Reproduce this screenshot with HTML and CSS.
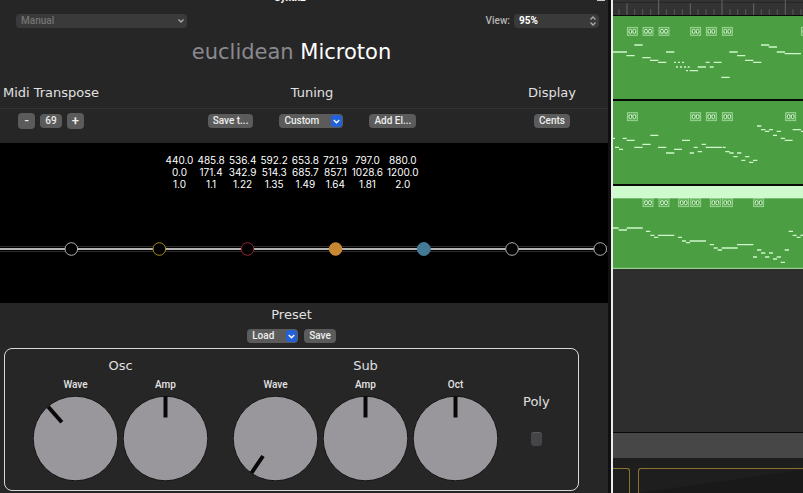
FILE: index.html
```
<!DOCTYPE html>
<html lang="en">
<head>
<meta charset="utf-8">
<title>Synth2</title>
<link rel="stylesheet" href="styles.css">
</head>
<body>
<main class="screen">
  <section class="plugin">
    <header class="titlebar"><span>Synth2</span><i class="link-icon"></i></header>
    <div class="toolbar">
      <span class="picker preset"><select aria-label="Preset mode" disabled><option>Manual</option></select>
        <svg class="chev" viewBox="0 0 8 6"><path d="M1.5 1.5 4 4 6.5 1.5"/></svg></span>
      <div class="view">
        <label for="zoom">View:</label>
        <span class="picker zoom"><select id="zoom"><option>95%</option></select>
          <svg class="updown" viewBox="0 0 8 10"><path d="M1.5 3.5 4 1 6.5 3.5M1.5 6.5 4 9 6.5 6.5"/></svg></span>
      </div>
    </div>
    <h1><span>euclidean</span> Microton</h1>
    <div class="heads"><h2>Midi Transpose</h2><h2>Tuning</h2><h2>Display</h2></div>
    <div class="controls">
      <div class="group steps"><button class="square">-</button><button>69</button><button class="square">+</button></div>
      <div class="group tuning">
        <button>Save t...</button>
        <span class="pop custom"><select aria-label="Tuning"><option>Custom</option></select><svg viewBox="0 0 10 11"><rect width="10" height="11" rx="2.5"/><path d="M2.5 4.5 5 7 7.5 4.5"/></svg></span>
        <button>Add El...</button>
      </div>
      <div class="group"><button>Cents</button></div>
    </div>
    <div class="scale">
      <table>
        <tr><td>440.0</td><td>485.8</td><td>536.4</td><td>592.2</td><td>653.8</td><td>721.9</td><td>797.0</td><td>880.0</td></tr>
        <tr><td>0.0</td><td>171.4</td><td>342.9</td><td>514.3</td><td>685.7</td><td>857.1</td><td>1028.6</td><td>1200.0</td></tr>
        <tr><td>1.0</td><td>1.1</td><td>1.22</td><td>1.35</td><td>1.49</td><td>1.64</td><td>1.81</td><td>2.0</td></tr>
      </table>
      <svg class="line" viewBox="0 0 608 16">
        <path d="M0 5.5H608M0 10.5H608" stroke="#2c2c2c"/>
        <path d="M0 8H600" stroke="#b4b4b4" stroke-width="2"/>
        <g fill="#000" stroke-width="1">
          <circle cx="71.3" cy="8" r="6.3" stroke="#b0b0b0"/>
          <circle cx="159.3" cy="8" r="6.3" stroke="#a58a1c"/>
          <circle cx="247.5" cy="8" r="6.3" stroke="#8e2430"/>
          <circle cx="335.6" cy="8" r="6.3" fill="#ca8732" stroke="#ca8732"/>
          <circle cx="423.8" cy="8" r="6.5" fill="#457a96" stroke="#457a96"/>
          <circle cx="512" cy="8" r="6.3" stroke="#b0b0b0"/>
          <circle cx="600.2" cy="8" r="6.3" stroke="#b0b0b0"/>
        </g>
      </svg>
    </div>
    <div class="presets">
      <h2>Preset</h2>
      <div class="group">
        <span class="pop load"><select aria-label="Preset"><option>Load</option></select><svg viewBox="0 0 10 11"><rect width="10" height="11" rx="2.5"/><path d="M2.5 4.5 5 7 7.5 4.5"/></svg></span>
        <button>Save</button>
      </div>
    </div>
    <div class="synth">
      <section class="bank"><h2>Osc</h2>
        <div class="knobs">
          <figure><figcaption>Wave</figcaption><svg viewBox="0 0 85 85"><circle cx="42.5" cy="42.5" r="42.3"/><path d="M15.2 10.8 28.8 26.2"/></svg></figure>
          <figure><figcaption>Amp</figcaption><svg viewBox="0 0 85 85"><circle cx="42.5" cy="42.5" r="42.3"/><path d="M42.5 0V21.5"/></svg></figure>
        </div>
      </section>
      <section class="bank"><h2>Sub</h2>
        <div class="knobs">
          <figure><figcaption>Wave</figcaption><svg viewBox="0 0 85 85"><circle cx="42.5" cy="42.5" r="42.3"/><path d="M30 60 18.5 77"/></svg></figure>
          <figure><figcaption>Amp</figcaption><svg viewBox="0 0 85 85"><circle cx="42.5" cy="42.5" r="42.3"/><path d="M42.5 0V21.5"/></svg></figure>
          <figure><figcaption>Oct</figcaption><svg viewBox="0 0 85 85"><circle cx="42.5" cy="42.5" r="42.3"/><path d="M42.5 0V21.5"/></svg></figure>
        </div>
      </section>
      <div class="poly"><label for="poly">Poly</label><input type="checkbox" id="poly"></div>
    </div>
  </section>

  <section class="arrange">
    <svg width="0" height="0" class="defs"><defs>
      <g id="loop"><rect x="1" y="1" width="30" height="24" fill="#5fae57" stroke="#a5dba0" stroke-width="2.5"/><g fill="#3c8a35" stroke="#d2f5ce" stroke-width="3"><rect x="6" y="7" width="8" height="12" rx="4"/><rect x="18" y="7" width="8" height="12" rx="4"/></g></g>
    </defs></svg>
    <svg class="ruler" viewBox="39 0 570 45">
      <path d="M39 7H609" stroke="#252525" stroke-width="3"/>
      <path d="M81 10V45M176 0V45M271 10V45M366 0V45M461 10V45M556 0V45" stroke="#666" stroke-width="3"/>
      <path d="M57 28V45M104 28V45M128 28V45M152 28V45M199 28V45M223 28V45M247 28V45M294 28V45M318 28V45M342 28V45M390 28V45M413 28V45M437 28V45M484 28V45M508 28V45M532 28V45M579 28V45M603 28V45" stroke="#5a5a5a" stroke-width="3"/>
    </svg>
    <svg class="track" viewBox="39 48 570 249">
      <use href="#loop" x="81" y="81"/><use href="#loop" x="128" y="81"/><use href="#loop" x="176" y="81"/><use href="#loop" x="271" y="81"/><use href="#loop" x="318" y="81"/><use href="#loop" x="366" y="81"/><use href="#loop" x="603" y="81"/>
      <path d="M39 156H81M79 167H104M103 135H128M127 173H152M150 181H175M174 187H199M198 156H223M222 187h6M234 187h6M246 187h6M228 201h6M240 201h6M252 201h6M263 201h6M258 212h6M269 212H294M293 201H318M317 187H329M329 201H341M341 187H365M364 232H389M388 156H413M411 167H436M435 181H460M459 187H484M483 135H508M506 141H531M530 156H555M554 161H603"/>
    </svg>
    <svg class="track" viewBox="39 17 570 249">
      <use href="#loop" x="81" y="51"/><use href="#loop" x="271" y="51"/><use href="#loop" x="318" y="51"/><use href="#loop" x="366" y="51"/><use href="#loop" x="556" y="51"/>
      <path d="M39 129h6M45 156H57M57 162H69M68 129H80M80 135H104M103 156H128M127 147H152M151 120H175M174 156H199M198 173H223M222 162H246M246 135H270M269 173H282M281 156H293M293 169H306M305 147H318M317 156H366M368 156H377M376 169H389M388 173H401M400 184H413M411 173H424M424 195H436M435 184H448M447 201H460M459 195H472M471 92H484M483 103H496M495 108H508M507 103H519M519 120H531M530 108H543M542 129H555M554 135H578M578 103H603M603 108h6"/>
    </svg>
    <svg class="track" viewBox="39 15 570 249">
      <rect x="39" y="15" width="570" height="37" fill="#cdfbce"/>
      <use href="#loop" x="128" y="52"/><use href="#loop" x="176" y="52"/><use href="#loop" x="235" y="52"/><use href="#loop" x="271" y="52"/><use href="#loop" x="330" y="52"/><use href="#loop" x="366" y="52"/><use href="#loop" x="460" y="52"/>
      <path d="M39 141H56M56 147H81M80 141H128M138 151H151M151 163H163M162 169H175M174 163H223M234 169H246M246 180H258M258 185H270M269 180H318M329 191H342M341 201H353M353 207H366M365 201H413M411 191H460M459 228H471M471 207H484M483 216H496M495 228H508M507 216H519M519 234H531M530 228H543M542 244H555M554 207H567M566 151H579M578 163H590M590 169H602M601 163h8"/>
      <path class="edge" d="M39 262H609"/>
    </svg>
    <div class="lane"></div>
    <div class="divider"></div>
    <div class="regions"><div class="first"></div><div class="second"></div></div>
  </section>
</main>
</body>
</html>
```
FILE: styles.css
```
* { box-sizing: border-box; }
body { margin: 0; background: #262626; color: #e4e4e4; font: 500 10px/12px Roboto, "Liberation Sans", sans-serif; }
h1, h2, figure { margin: 0; }
svg { display: block; }
.screen { display: grid; grid-template-columns: 613fr 190fr; height: 100vh; overflow: hidden; }

.plugin { border-right: 2px solid #ececec; box-shadow: inset -3px 0 #101010; padding-right: 3px; min-width: 0; }
.titlebar { display: flex; height: 4px; justify-content: center; align-items: flex-end; position: relative; padding-right: 28px; overflow: hidden; color: #fff; font-weight: 700; }
.link-icon { position: absolute; right: 3px; top: 0; width: 8px; height: 1px; background: #ccc; }
.toolbar { display: flex; justify-content: space-between; align-items: center; padding: 8px 9px 0 16px; height: 26px; }
.picker, .pop { position: relative; display: inline-flex; align-items: center; }
select, button { appearance: none; border: 0; margin: 0; font: inherit; color: inherit; border-radius: 4px; height: 14px; white-space: nowrap; }
.picker select { width: 100%; background: #3a3a3a; padding: 0 5px; }
.preset { width: 171px; }
.preset select { color: #747474; opacity: 1; }
.zoom { width: 85px; }
.zoom select { font-weight: 700; color: #fff; }
.view { display: flex; align-items: center; gap: 4px; color: #b5b5b5; }
.chev, .updown { position: absolute; right: 2px; width: 8px; fill: none; stroke: #aaa; stroke-width: 1.3; pointer-events: none; }
h1 { font: 21px/28px "DejaVu Sans", sans-serif; text-align: center; color: #fff; padding-right: 25px; margin-top: 8px; }
h1 span { color: #8b8990; }
h2, .poly label { font: 13px/16px "DejaVu Sans", sans-serif; color: #e0e0e0; text-align: center; white-space: nowrap; }
.heads, .controls { display: grid; grid-template-columns: 94px 1fr 52px; padding: 0 30px 0 4px; justify-items: center; }
.heads { margin-top: 19px; height: 24px; border-bottom: 1px solid #333; }
.controls { height: 34px; padding-top: 5px; }
.group { display: flex; align-items: center; justify-content: center; gap: 6px; height: 14px; }
.steps { gap: 5px; }
.tuning { gap: 26px; }
button { background: #5b5b5b; padding: 0 5px; color: #eee; }
.square { width: 17px; height: 16px; font-size: 13px; }
.pop select { width: 100%; background: #5b5b5b; padding: 0 5px; color: #eee; }
.pop svg { position: absolute; right: 1px; width: 11px; height: 12px; fill: #2361d8; pointer-events: none; }
.pop path { fill: none; stroke: #fff; stroke-width: 1.3; }
.custom { width: 64px; }
.load { width: 51px; }
.scale { background: #000; height: 160px; padding-top: 11px; }
table { margin: 0 auto; border-collapse: collapse; position: relative; right: 12px; color: #fff; font-family: Inter, sans-serif; font-weight: 400; }
td { padding: 0 2px; text-align: center; }
.line { width: 100%; margin-top: 51px; }
.presets { padding: 4px 25px 5px 0; display: flex; flex-direction: column; gap: 6px; }
.synth { display: flex; margin: 0 29px 0 4px; border: 1px solid #d8d8d8; border-radius: 8px; padding: 9px 0 9px 28px; gap: 25px; }
.knobs { display: flex; gap: 5px; margin-top: 5px; }
.knobs svg { width: 85px; fill: #99979c; stroke: #151515; stroke-width: 1; margin-top: 5px; }
.knobs path { stroke: #080808; stroke-width: 4; }
figcaption { text-align: center; }
.poly { display: flex; flex-direction: column; align-items: center; gap: 22px; padding-top: 36px; }
.poly input { appearance: none; margin: 0; width: 11px; height: 14px; border-radius: 3px; background: #454549; border-top: 1px solid #5a5a5e; }

.arrange { min-width: 0; display: flex; flex-direction: column; background: #090909; }
.arrange svg { width: 100%; flex: none; }
.arrange .defs { position: absolute; width: 0; height: 0; }
.ruler { background: #333; }
.track { background: #4b9e42; margin-top: 1px; }
.track + .track { margin-top: 2px; }
.track > path { stroke: #d0f8cc; stroke-width: 4; }
.track > .edge { stroke: #a9dda4; stroke-width: 3; }
.lane { flex: 1; background: #2e2e2e; }
.divider { height: 25px; margin-top: 1px; background: #474747; }
.regions { height: 35px; background: #1e1e1e; padding-top: 10px; display: flex; gap: 8px; overflow: hidden; }
.regions div { border: 1px solid #8a7330; border-bottom: 0; }
.regions .first { width: 17px; border-left: 0; border-top-right-radius: 3px; }
.regions .second { flex: 1; border-right: 0; border-top-left-radius: 3px; background: linear-gradient(172deg, #1e1e1e 50%, #191919 51%); }
```
